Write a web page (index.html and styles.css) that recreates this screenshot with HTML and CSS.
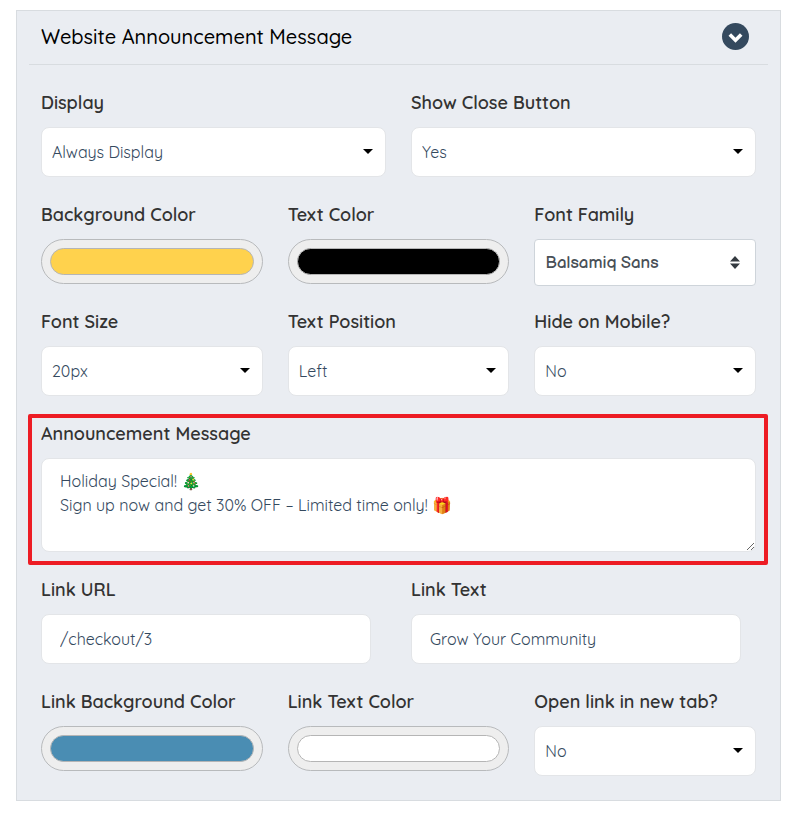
FILE: index.html
```html
<!DOCTYPE html>
<html lang="en">
<head>
    <meta charset="UTF-8">
    <meta name="viewport" content="width=device-width, initial-scale=1.0">
    <title>Website Announcement Message</title>
    <link rel="stylesheet" href="styles.css">
</head>
<body>
    <form class="panel">
        <div class="panel-header">
            <h1>Website Announcement Message</h1>
            <button type="button" class="toggle" aria-label="Collapse section">
                <svg viewBox="0 0 27 27" width="27" height="27">
                    <circle cx="13.5" cy="13.5" r="13.5" fill="#34495e"/>
                    <path d="M7.8 11.5l5.7 5.7 5.7-5.7" fill="none" stroke="#fff" stroke-width="3.6"/>
                </svg>
            </button>
        </div>

        <div class="row cols-2">
            <div class="field">
                <label for="display">Display</label>
                <div class="select">
                    <select id="display"><option>Always Display</option></select>
                </div>
            </div>
            <div class="field">
                <label for="showClose">Show Close Button</label>
                <div class="select">
                    <select id="showClose"><option>Yes</option><option>No</option></select>
                </div>
            </div>
        </div>

        <div class="row cols-3">
            <div class="field">
                <label for="bgColor">Background Color</label>
                <input type="color" id="bgColor" value="#ffd24d">
            </div>
            <div class="field">
                <label for="textColor">Text Color</label>
                <input type="color" id="textColor" value="#000000">
            </div>
            <div class="field">
                <label for="fontFamily">Font Family</label>
                <div class="font-select">
                    <select id="fontFamily"><option>Balsamiq Sans</option></select>
                    <svg viewBox="0 0 10 13" width="10" height="13">
                        <path d="M0 5.5L5 0l5 5.5zM0 7.5h10L5 13z" fill="#343a40"/>
                    </svg>
                </div>
            </div>
        </div>

        <div class="row cols-3">
            <div class="field">
                <label for="fontSize">Font Size</label>
                <div class="select">
                    <select id="fontSize"><option>20px</option></select>
                </div>
            </div>
            <div class="field">
                <label for="textPosition">Text Position</label>
                <div class="select">
                    <select id="textPosition"><option>Left</option><option>Center</option><option>Right</option></select>
                </div>
            </div>
            <div class="field">
                <label for="hideMobile">Hide on Mobile?</label>
                <div class="select">
                    <select id="hideMobile"><option>No</option><option>Yes</option></select>
                </div>
            </div>
        </div>

        <div class="row highlight">
            <div class="field">
                <label for="message">Announcement Message</label>
                <textarea id="message">Holiday Special! 🎄
Sign up now and get 30% OFF – Limited time only! 🎁</textarea>
            </div>
        </div>

        <div class="row cols-2">
            <div class="field">
                <label for="linkUrl">Link URL</label>
                <input type="text" id="linkUrl" value="/checkout/3">
            </div>
            <div class="field">
                <label for="linkText">Link Text</label>
                <input type="text" id="linkText" value="Grow Your Community">
            </div>
        </div>

        <div class="row cols-3">
            <div class="field">
                <label for="linkBg">Link Background Color</label>
                <input type="color" id="linkBg" value="#4a8db3">
            </div>
            <div class="field">
                <label for="linkColor">Link Text Color</label>
                <input type="color" id="linkColor" value="#ffffff">
            </div>
            <div class="field">
                <label for="newTab">Open link in new tab?</label>
                <div class="select">
                    <select id="newTab"><option>No</option><option>Yes</option></select>
                </div>
            </div>
        </div>
    </form>
</body>
</html>
```
FILE: styles.css
```css
* {
    box-sizing: border-box;
}
body {
    margin: 10px 14px 16px 16px;
    font-family: Quicksand, "Open Sans", sans-serif;
    font-size: 16px;
    line-height: 24px;
    color: #333;
    background-color: #fff;
}
.panel {
    display: flex;
    flex-direction: column;
    gap: 26px;
    padding: 0 12px 24px;
    border: 1px solid #d8dce0;
    background-color: #eaedf2;
}
.panel-header {
    display: flex;
    align-items: center;
    justify-content: space-between;
    height: 54px;
    padding: 0 19px 2px 12px;
    border-bottom: 1px solid #d8dce0;
}
.panel-header h1 {
    margin: 0;
    font-size: 20px;
    font-weight: 500;
    color: #000;
}
.toggle {
    padding: 0;
    border: none;
    background: none;
    cursor: pointer;
}
.toggle svg {
    display: block;
}
.row {
    display: grid;
    gap: 25px;
    padding: 0 12px;
}
.cols-2 {
    grid-template-columns: 1fr 1fr;
}
.cols-3 {
    grid-template-columns: 1fr 1fr 1fr;
}
.field {
    min-width: 0;
}
label {
    display: block;
    margin-bottom: 12px;
    font-size: 18px;
    font-weight: 600;
    white-space: nowrap;
}
.select,
.font-select {
    position: relative;
}
select,
textarea,
input[type="text"] {
    display: block;
    width: 100%;
    height: 50px;
    border: 1px solid #e3e5e8;
    border-radius: 8px;
    background-color: #fff;
    color: #34495e;
    font-family: inherit;
    font-size: 16px;
    font-weight: 400;
    line-height: 24px;
}
select {
    padding: 0 30px 0 10px;
    appearance: none;
}
.select::after {
    content: "";
    position: absolute;
    top: 22px;
    right: 13px;
    border: 5px solid transparent;
    border-top-color: #000;
    border-bottom: none;
    pointer-events: none;
}
.font-select {
    height: 45px;
}
.font-select select {
    height: 47px;
    border-color: #ced4da;
    border-radius: 4px;
    font-family: "Balsamiq Sans", "Open Sans", sans-serif;
    font-size: 17px;
    color: #495057;
}
.font-select svg {
    position: absolute;
    top: 17px;
    right: 16px;
    pointer-events: none;
}
input[type="text"] {
    width: calc(100% - 15px);
    padding: 0 18px;
}
input[type="color"] {
    display: block;
    width: 100%;
    height: 45px;
    padding: 8px;
    border: 1px solid #b8babc;
    border-radius: 23px;
    background-color: #eee;
}
input[type="color"]::-webkit-color-swatch-wrapper {
    padding: 0;
}
input[type="color"]::-webkit-color-swatch {
    border: 1px solid #b5b5b5;
    border-radius: 14px;
}
textarea {
    height: 94px;
    padding: 10px 18px;
    resize: vertical;
}
/* red frame round the message field */
.highlight {
    position: relative;
}
.highlight::after {
    content: "";
    position: absolute;
    top: -8px;
    right: 0;
    bottom: -13px;
    left: -1px;
    border: 4px solid #ed1c24;
    border-radius: 2px;
    pointer-events: none;
}
```
